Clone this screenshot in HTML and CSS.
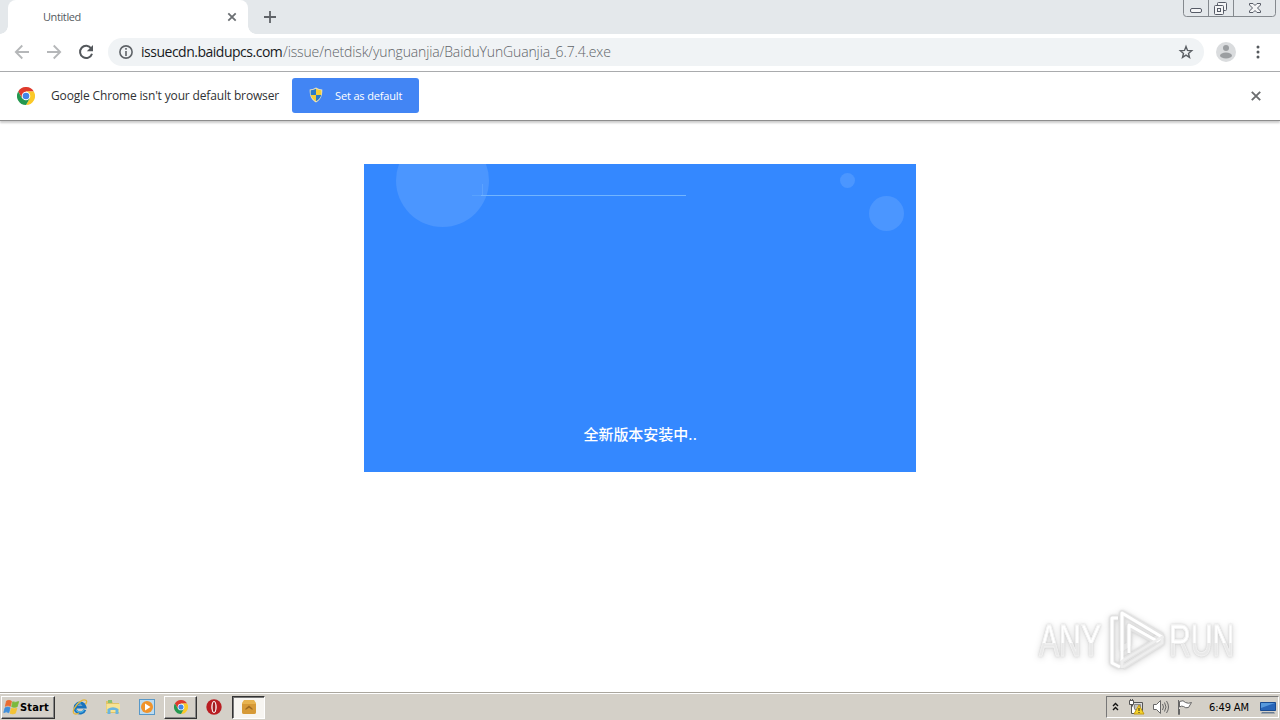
FILE: index.html
```
<!DOCTYPE html>
<html lang="en">
<head>
<meta charset="utf-8">
<title>Untitled</title>
<link rel="stylesheet" href="styles.css">
</head>
<body>
<svg class="defs" width="0" height="0">
  <symbol id="chrome" viewBox="0 0 18 18">
    <path d="M1.2 4.5A9 9 0 0 1 16.8 4.5H9L5.1 11.2Z" fill="#df3a2c"/>
    <path d="M16.8 4.5A9 9 0 0 1 9 18L12.9 11.2 9 4.5Z" fill="#fbc928"/>
    <path d="M1.2 4.5A9 9 0 0 0 9 18l3.900-6.800H5.100Z" fill="#24984f"/>
    <circle cx="9" cy="9" r="4.300" fill="#fff"/><circle cx="9" cy="9" r="3.300" fill="#4285e8"/>
  </symbol>
</svg>
<div class="screen">
  <header class="tabstrip">
    <div class="edge"></div>
    <div class="tab">
      <span class="tab-title">Untitled</span>
      <svg width="10" height="10" viewBox="0 0 10 10"><path d="M1.3 1.3l7.4 7.4M8.7 1.3L1.3 8.7" stroke="#6b6f73" stroke-width="1.8"/></svg>
    </div>
    <div class="newtab"><svg width="12" height="12" viewBox="0 0 12 12"><path d="M6 0v12M0 6h12" stroke="#5f6368" stroke-width="1.800"/></svg></div>
    <svg class="winbtns" width="94" height="18" viewBox="0 0 94 18" fill="none" stroke="#84898e">
      <path d="M.5 0v13.500q0 3 3 3h86q3 0 3-3V0M25.500 0v16.500M50.500 0v16.500"/>
      <g stroke="#565b66"><rect x="7.500" y="8.500" width="11" height="4" rx="1.500" fill="#f4f5f6"/>
      <rect x="34.500" y="2.500" width="9" height="8" rx="1" fill="#f4f5f6"/><rect x="31.500" y="5.500" width="9" height="9" rx="1" fill="#f4f5f6"/><rect x="34.500" y="8.500" width="3" height="3"/>
      <path d="M66.500 3.500h3.500l2 2 2-2h3.500v1.500L74.500 8l3 3v1.500H74l-2-2-2 2h-3.500V11l3-3-3-3z" fill="#f4f5f6"/></g>
    </svg>
  </header>
  <nav class="toolbar">
    <svg class="back" width="16" height="16" viewBox="0 0 16 16" fill="none" stroke="#b5b7b9" stroke-width="1.800"><path d="M15 8H2M8.300 1.500L1.800 8l6.500 6.500"/></svg>
    <svg class="forward" width="16" height="16" viewBox="0 0 16 16" fill="none" stroke="#b5b7b9" stroke-width="1.800"><path d="M1 8h13M7.700 1.500L14.200 8l-6.500 6.500"/></svg>
    <svg class="reload" width="16" height="16" viewBox="0 0 16 16"><path d="M13.200 4.500A6.100 6.100 0 1 0 14 9.700" fill="none" stroke="#54585c" stroke-width="2"/><path d="M15 1v6.200H8.800z" fill="#54585c"/></svg>
    <div class="omnibox">
      <svg width="14" height="14" viewBox="0 0 14 14"><circle cx="7" cy="7" r="6.100" fill="none" stroke="#5f6368" stroke-width="1.600"/><path d="M7 3v1.700M7 6v5" stroke="#5f6368" stroke-width="1.600"/></svg>
      <div class="url"><span class="host">issuecdn.baidupcs.com</span><span class="path">/issue/netdisk/yunguanjia/BaiduYunGuanjia_6.7.4.exe</span></div>
      <svg class="star" width="16" height="16" viewBox="0 0 16 16"><path d="M8 2.500l1.500 3.900 4.200.3-3.200 2.700 1 4L8 11.200l-3.500 2.200 1-4-3.200-2.700 4.200-.3z" fill="none" stroke="#5b5f64" stroke-width="1.400"/></svg>
    </div>
    <svg class="avatar" width="20" height="20" viewBox="0 0 20 20"><circle cx="10" cy="10" r="10" fill="#dadcde"/><circle cx="10" cy="6" r="3" fill="#9b9ea1"/><ellipse cx="10" cy="13.500" rx="6" ry="3" fill="#9b9ea1"/></svg>
    <svg class="more" width="4" height="14" viewBox="0 0 4 14" fill="#55595d"><circle cx="2" cy="2" r="1.500"/><circle cx="2" cy="7" r="1.500"/><circle cx="2" cy="12" r="1.500"/></svg>
  </nav>
  <section class="infobar">
    <svg class="logo" width="18" height="18"><use href="#chrome"/></svg>
    <span class="info-text">Google Chrome isn't your default browser</span>
    <div class="button">
      <svg class="shield" width="14" height="16" viewBox="0 0 14 16"><path d="M7 .5Q4 2.300.700 2.500C.500 9 2.500 13 7 15.500 11.500 13 13.500 9 13.300 2.500Q10 2.300 7 .5Z" fill="#e9e1bd"/><path d="M7 1.800V8H1.800Q1.500 6 1.700 3.300 5 3 7 1.800M7 8h5.200Q11.200 12 7 14.300Z" fill="#297bc8"/><path d="M7 1.800V8h5.200q.3-2 .1-4.700Q9 3 7 1.800M7 8H1.800Q2.800 12 7 14.300Z" fill="#f3ce37"/></svg>
      <span>Set as default</span>
    </div>
    <svg class="dismiss" width="10" height="10" viewBox="0 0 10 10"><path d="M.8.800l8.400 8.400M9.200.800L.8 9.200" stroke="#6b6d6f" stroke-width="1.900"/></svg>
  </section>
  <main class="page">
    <div class="splash">
      <svg class="bubbles" width="552" height="80" viewBox="0 0 552 80"><g fill="#4b96ff"><circle cx="78.500" cy="16.500" r="46.500"/><circle cx="483.500" cy="16.500" r="7.500"/><circle cx="522.500" cy="49.500" r="17.500"/></g><path d="M118.500 20v11" stroke="#5ca2ff"/><path d="M108 31.500h12" stroke="#59a2fe"/><path d="M117 31.500h205" stroke="#72b5ff"/></svg>
      <p class="status">全新版本安装中<span class="dots">..</span></p>
    </div>
    <div class="watermark">
      <span class="any">ANY</span>
      <svg width="58" height="62" viewBox="0 0 58 62" fill="none" stroke-linejoin="round"><g stroke="#e4e4e4" stroke-width="5"><path d="M10 8H4v45l8 4M14 3v36l7-5V17l24 13 8-5zM15 57l39-24V27L14 51v7"/></g><path d="M10 8H4v45l8 4M14 51V3l40 24-5 4L21 15v28" stroke="#fff" stroke-width="3"/><path d="M15 57l39-24V27L14 51v7" stroke="#eee" stroke-width="2.500"/></svg>
      <span class="run">RUN</span>
    </div>
  </main>
  <footer class="taskbar">
    <div class="start">
      <svg width="17" height="17" viewBox="0 0 17 17" stroke-linejoin="round" stroke-width=".8"><path d="M3.500 2q2.500-1.500 5 .2L7.400 7.300q-2.500-1.500-5 0z" fill="#ea6c31" stroke="#ea6c31"/><path d="M9.700 2.800q3 1.200 6-.3L14.200 7.700q-3 1.300-5.500 0z" fill="#7bb93c" stroke="#7bb93c"/><path d="M2.100 8.800q3-1.500 5 0L5.800 13.800q-2.500-1.800-5-.2z" fill="#3f8edb" stroke="#3f8edb"/><path d="M8.400 9.200q3 1.200 5.500 0L12.400 14.200q-2.500 1.300-5.300.1z" fill="#f4c334" stroke="#f4c334"/></svg>
      <b>Start</b>
    </div>
    <svg class="ie" width="16" height="16" viewBox="0 0 16 16" fill="none"><path d="M12.800 10.800A5 5 0 1 1 13 8H4.500" stroke="#1872bd" stroke-width="3"/><path d="M12 11A4.500 4.500 0 0 1 4 10.500M4 6.500Q6 3.500 9 4" stroke="#4fb8ea" stroke-width="1.200"/><path d="M2 14.500C-1 11 9-1 14 1.300q1.500 1-.5 4M2 14.500q2 1.200 5-.5" stroke="#e2b53c" stroke-width="1.300"/></svg>
    <svg class="explorer" width="16" height="16" viewBox="0 0 16 16"><path d="M1 2h6l1 2h6v10H1z" fill="#e0c367"/><path d="M3 1h4v3H3z" fill="#8ac070"/><path d="M1.500 5H15v8H1.500z" fill="#f7e394"/><path d="M2.500 15V10q5.500-3.500 11 0v5h-3v-4h-5v4z" fill="#69b5df"/></svg>
    <svg class="media" width="16" height="16" viewBox="0 0 16 16"><rect x=".5" y=".5" width="15" height="15" fill="#bcdbf0" stroke="#5898c8"/><circle cx="8" cy="8" r="6" fill="#f0932b"/><path d="M6 4.500v7L11.500 8z" fill="#fff"/></svg>
    <div class="task"><svg width="14" height="14"><use href="#chrome"/></svg></div>
    <svg class="opera" width="16" height="16" viewBox="0 0 16 16"><circle cx="8" cy="8" r="7.700" fill="#b91d22"/><ellipse cx="8" cy="8" rx="2.700" ry="6" fill="#fff"/><ellipse cx="8" cy="8" rx="1.400" ry="5" fill="#a11b20"/></svg>
    <div class="task active"><svg width="16" height="16" viewBox="0 0 16 16"><path d="M3 1h10l2 3v9q0 2-2 2H3q-2 0-2-2V4z" fill="#e7b350"/><path d="M1 5h14v8q0 2-2 2H3q-2 0-2-2z" fill="#d69a38"/><path d="M4.500 11V9.500L8 6.500l3.500 3V11L8 8.700z" fill="#9d6922"/></svg></div>
    <div class="tray">
      <svg class="chev" width="7" height="9" viewBox="0 0 7 9" fill="none" stroke="#111" stroke-width="1.400"><path d="M1 4l2.500-2.500L6 4M1 8l2.500-2.500L6 8"/></svg>
      <svg class="net" width="17" height="16" viewBox="0 0 17 16"><path d="M4.500 3.500h10v9h-10z" fill="#ddd" stroke="#555"/><path d="M6.500 5.500h6v5h-6z" fill="#c4c4bd" stroke="#888"/><path d="M1.500 1.500h4v4h-4zM2.500 0v2M4.500 0v2M3.500 6v8.500H9" fill="#fff" stroke="#555"/><path d="M11 6l5 9H6z" fill="#f5d32a" stroke="#c39a16"/><path d="M11 9v3M11 13v1" stroke="#222"/></svg>
      <svg class="sound" width="17" height="16" viewBox="0 0 17 16" fill="none" stroke="#666"><path d="M1.500 5.500h3l4-4v13l-4-4h-3z" fill="#fff"/><path d="M10.500 5q2 3 0 6M12.500 3.500q3 4.500 0 9M14.500 2q4 6 0 12"/></svg>
      <svg class="flag" width="16" height="16" viewBox="0 0 16 16" fill="#fff" stroke="#666"><path d="M1.500 1v14.500h1V10M2.500 2.500q4-2 6 1 3 1.500 6 0l-3 5q-3 1-5-1-2-1-4 .5z"/></svg>
      <span class="clock">6:49 AM</span>
      <svg class="desktop" width="16" height="13" viewBox="0 0 16 13"><path d="M.5 1.500h15v8H.5z" fill="#2865b8" stroke="#194b91"/><path d="M1 2h14L1 7z" fill="#5799dc"/><path d="M2 11h12l1 1.500H1z" fill="#687b91"/></svg>
    </div>
  </footer>
</div>
</body>
</html>
```
FILE: styles.css
```
* { box-sizing: border-box; }
body { margin: 0; background: #fff; font-family: "Open Sans", "Noto Sans", sans-serif; overflow: hidden; }
.defs { position: absolute; }
svg { flex: none; display: block; }
span, b { white-space: nowrap; }
.screen { width: 1280px; height: 720px; display: flex; flex-direction: column; }
.tabstrip { height: 34px; background: #e4e8eb; display: flex; }
.edge { width: 8px; background: radial-gradient(circle at 0 0, transparent 7.5px, #fff 8px) 0 26px / 8px 8px no-repeat; }
.tab { width: 240px; background: #fff; border-radius: 8px 8px 0 0; display: flex; align-items: center; justify-content: space-between; padding: 0 11px 0 35px; }
.tab-title { padding-bottom: 2px; font-size: 11px; color: #555a5e; letter-spacing: -.4px; }
.newtab { flex: 1; padding: 11px 16px; background: radial-gradient(circle at 8px 0, transparent 7.5px, #fff 8px) 0 26px / 8px 8px no-repeat; }
.winbtns { margin-right: 3px; }
.toolbar { height: 38px; display: flex; align-items: center; border-bottom: 1px solid #a9abad; padding: 0 20px 1px 14px; }
.forward, .reload { margin-left: 16px; }
.omnibox { width: 1096px; height: 28px; margin-left: 14px; border-radius: 14px; background: #f0f3f5; display: flex; align-items: center; padding: 0 10px 0 11px; }
.url { flex: 1; display: flex; padding-left: 8px; font-size: 14px; line-height: 20px; }
.host { width: 142px; color: #171a1d; letter-spacing: -.49px; }
.path { color: #5f6468; font-weight: 300; letter-spacing: -.13px; }
.avatar { margin-left: 12px; }
.more { margin-left: 20px; }
.infobar { height: 49px; display: flex; align-items: center; padding: 0 19px 1px 17px; border-bottom: 1px solid #8d8d8d; box-shadow: 0 2px 2px #ccc; }
.logo { margin-top: 1px; }
.info-text { width: 241px; margin-left: 16px; font-size: 12px; color: #303234; letter-spacing: -.15px; }
.button { width: 127px; height: 35px; background: #4285f4; border-radius: 3px; color: #fff; display: flex; align-items: center; padding: 0 0 1px 17px; gap: 12px; font-size: 11px; letter-spacing: -.15px; }
.dismiss { margin: 1px 0 0 auto; }
.page { flex: 1; display: flex; flex-direction: column; align-items: center; padding-top: 43px; }
.splash { width: 552px; height: 308px; background: #3488ff; display: flex; flex-direction: column; align-items: center; justify-content: space-between; padding-bottom: 27px; }
.status { margin: 0; padding-left: 1px; color: #fff; font: 500 15px/22px "Noto Sans CJK SC", sans-serif; letter-spacing: -.05px; }
.dots { font-weight: 400; letter-spacing: .5px; }
.watermark { align-self: flex-end; margin: 137px 47px 0 0; height: 64px; display: flex; align-items: center; font: 45px/60px "Liberation Sans", sans-serif; filter: drop-shadow(0 0 1px #ccc) drop-shadow(0 1px 3px #ddd); }
.any, .run { display: block; transform-origin: left; transform: scaleX(.67); color: transparent; background: linear-gradient(#fff 53%, #e9e9e9 53%); background-clip: text; -webkit-text-stroke: .8px #f3f3f3; }
.any { width: 96px; margin-right: -27px; }
.run { width: 98px; margin: 0 -34px 0 3px; }
.taskbar { height: 28px; background: #d4d0c8; border-top: 1px solid #aaa69e; box-shadow: inset 0 1px #fff; display: flex; align-items: center; padding: 1px 1px 0 1px; }
.start { width: 54px; height: 23px; display: flex; align-items: center; padding-left: 1px; border: 1px solid; border-color: #fff #333 #333 #fff; box-shadow: inset -1px -1px #888; }
.start b { font: bold 11px "DejaVu Sans Condensed", sans-serif; color: #000; letter-spacing: .15px; }
.ie { margin-left: 17px; }
.explorer { margin-left: 17px; }
.media { margin-left: 18px; }
.task { width: 33px; height: 23px; margin-left: 9px; display: flex; align-items: center; justify-content: center; border: 1px solid; border-color: #fff #333 #333 #fff; box-shadow: inset -1px -1px #888; }
.opera { margin-left: 9px; }
.task.active { margin-left: 10px; background: #f7f5f1; border-color: #333 #fff #fff #333; box-shadow: inset 1px 1px #777; }
.tray { width: 173px; height: 22px; margin-left: auto; display: flex; align-items: center; border: 1px solid; border-color: #777 #fff #fff #777; padding: 0 2px 0 5px; }
.chev { margin-bottom: 2px; }
.net { margin-left: 9px; }
.sound { margin-left: 7px; }
.flag { margin-left: 8px; }
.clock { width: 50px; margin-left: 16px; font: 11px "DejaVu Sans Condensed", sans-serif; letter-spacing: -.1px; }
.desktop { margin-left: auto; }
```
